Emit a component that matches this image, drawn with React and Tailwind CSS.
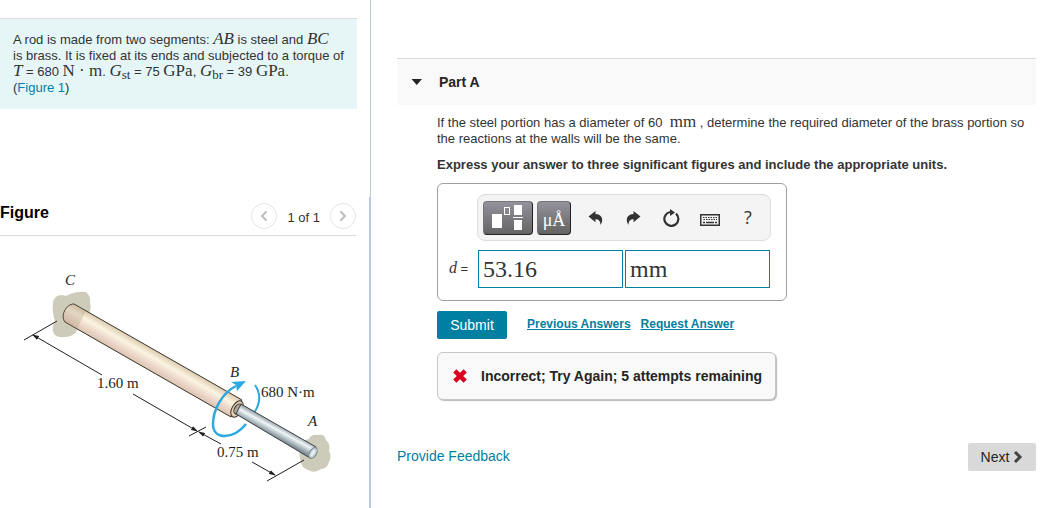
import { useState } from "react"
import { ChevronLeft, ChevronRight } from "lucide-react"

function MathText({ children, italic = false }) {
  return (
    <span
      className={`inline-block font-['Liberation_Serif',serif] text-[17px] leading-3 ${italic ? "italic" : ""}`}
    >
      {children}
    </span>
  )
}

function Problem() {
  return (
    <section className="mt-[18px] mr-[13px] border-t border-[#dcdcdc] bg-[#e6f6f7] pt-[13px] pr-1 pb-[13px] pl-[13px] text-[13px] leading-4">
      <p>
        A rod is made from two segments: <MathText italic>AB</MathText> is steel and <MathText italic>BC</MathText>
        <br />
        is brass. It is fixed at its ends and subjected to a torque of
        <br />
        <MathText italic>T</MathText> = 680 <MathText>N · m</MathText>. <MathText italic>G</MathText>
        <sub className="font-['Liberation_Serif',serif] text-[13px]">st</sub> = 75 <MathText>GPa</MathText>,{" "}
        <MathText italic>G</MathText>
        <sub className="font-['Liberation_Serif',serif] text-[13px]">br</sub> = 39 <MathText>GPa</MathText>.
      </p>
      <p>
        (
        <a href="#figure" className="text-[#007fa3]">
          Figure 1
        </a>
        )
      </p>
    </section>
  )
}

function RodDiagram() {
  return (
    <svg viewBox="0 236 369 260" className="block w-full" role="img" aria-label="Rod fixed at walls A and C">
      <defs>
        <linearGradient id="brass" gradientUnits="userSpaceOnUse" x1="158" y1="352" x2="146" y2="373">
          <stop offset="0" stopColor="#dccbae" />
          <stop offset="0.3" stopColor="#fbf4e2" />
          <stop offset="0.6" stopColor="#ecd6c8" />
          <stop offset="1" stopColor="#cdb89f" />
        </linearGradient>
        <linearGradient id="steel" gradientUnits="userSpaceOnUse" x1="279" y1="425" x2="273" y2="436">
          <stop offset="0" stopColor="#8e9ca3" />
          <stop offset="0.4" stopColor="#f1f6f8" />
          <stop offset="0.7" stopColor="#b4c2c8" />
          <stop offset="1" stopColor="#7d8b90" />
        </linearGradient>
        <marker id="arrow" orient="auto-start-reverse" markerUnits="userSpaceOnUse" markerWidth="7" markerHeight="5" refX="6" refY="2.5">
          <path d="M0 0.3 L7 2.5 L0 4.7 Z" fill="#231f20" />
        </marker>
      </defs>

      {/* Walls */}
      <path
        d="M53 303 Q54 295 62 295 Q67 297 70 294 Q78 291 86 292 Q91 296 90 303 Q92 309 88 316 Q86 325 78 329 Q74 337 65 337 Q54 338 53 331 Q52 326 55 321 Q52 312 53 303 Z"
        fill="#cdcbb9"
      />
      <path
        d="M301 445 Q304 439 309 439 Q311 434 318 435 Q325 434 326 440 Q331 445 329 451 Q332 457 329 462 Q327 469 321 469 Q314 474 308 470 Q301 467 301 462 Q298 455 301 445 Z"
        fill="#cdcbb9"
      />

      {/* Far side of the torque arc */}
      <path d="M255 385 Q264 398 254 413" fill="none" stroke="#2ba9e0" strokeWidth="2" />

      {/* Brass segment */}
      <path
        d="M74 304 L242 400 L231 417 L65 322 C60 316 66 304 74 304 Z"
        fill="url(#brass)"
        stroke="#3b332c"
        strokeWidth="1"
      />
      <path d="M74 304 L86 311 L77 329 L65 322 C60 316 66 304 74 304 Z" fill="#a8987a" opacity="0.3" />
      <ellipse cx="237" cy="409" rx="5" ry="9" transform="rotate(30 237 409)" fill="#e5cfb6" stroke="#3b332c" />
      <ellipse cx="238" cy="409" rx="3.5" ry="5.5" transform="rotate(30 238 409)" fill="#a9a59b" stroke="#3b332c" />

      {/* Steel segment */}
      <path d="M241 404 L316 447 L310 458 L236 414 Z" fill="url(#steel)" stroke="#3b4346" strokeWidth="1" />
      <ellipse cx="313" cy="453" rx="3.5" ry="6" transform="rotate(30 313 453)" fill="#c2ced2" stroke="#7b888c" />
      <ellipse cx="313" cy="453" rx="1.5" ry="3.5" transform="rotate(30 313 453)" fill="#e7eef0" />

      {/* Torque arrow */}
      <path d="M236 386 C222 393 213 410 213 424 C213 440 233 440 246 424" fill="none" stroke="#2ba9e0" strokeWidth="2.5" />
      <path d="M246 381 L231 382 L236 385 L237 391 Z" fill="#2ba9e0" />

      {/* Dimension lines */}
      <g stroke="#231f20" strokeWidth="1" fill="none">
        <path d="M24 340 L57 321" />
        <path d="M33 335 L102 375" markerStart="url(#arrow)" />
        <path d="M133 394 L197 431" markerEnd="url(#arrow)" />
        <path d="M189 436 L206 427" />
        <path d="M199 432 L221 444" markerStart="url(#arrow)" />
        <path d="M252 462 L275 475" markerEnd="url(#arrow)" />
        <path d="M267 481 L304 460" />
      </g>

      <g className="font-['Liberation_Serif',serif] text-[15px]" fill="#231f20">
        <text x="65" y="285" fontStyle="italic">C</text>
        <text x="230" y="377" fontStyle="italic">B</text>
        <text x="308" y="426" fontStyle="italic">A</text>
        <text x="97" y="388">1.60 m</text>
        <text x="261" y="397">680 N·m</text>
        <text x="217" y="457">0.75 m</text>
      </g>
    </svg>
  )
}

function Figure() {
  return (
    <section id="figure">
      <div className="mr-[13px] flex h-[39px] items-center justify-between border-b border-[#dcdcdc]">
        <h2 className="pb-1.5 text-base font-bold text-black">Figure</h2>
        <div className="flex items-center gap-2.5">
          <button
            aria-label="Previous figure"
            className="flex size-[26px] items-center justify-center rounded-full border border-[#e4e4e4] text-[#bdbdbd]"
          >
            <ChevronLeft className="size-4" strokeWidth={3} />
          </button>
          <span className="pt-1 text-[13px] leading-4">1 of 1</span>
          <button
            aria-label="Next figure"
            className="flex size-[26px] items-center justify-center rounded-full border border-[#e4e4e4] text-[#bdbdbd]"
          >
            <ChevronRight className="size-4" strokeWidth={3} />
          </button>
        </div>
      </div>
      <RodDiagram />
    </section>
  )
}

function CurvedArrow({ className = "" }) {
  return (
    <svg viewBox="0 0 15 16" className={`h-4 w-[15px] ${className}`} fill="currentColor">
      <path d="M.5 6.5 L7.5 1 V4 C12 4 14.5 7 14.2 10.5 C14 12.5 13.3 13.5 12.5 15 C12.5 11 10.5 9.3 7.5 9.3 V12.3 Z" />
    </svg>
  )
}

function Toolbar() {
  const darkButton =
    "flex h-[34px] items-center justify-center rounded border border-[#77757c] border-r-[#222] border-b-[#222] bg-linear-to-b from-[#94929c] to-[#646464] text-white"

  return (
    <div className="flex h-[47px] items-center rounded-lg border border-[#dddddd] bg-[#f4f4f4] pl-[5px] text-[#333333]">
      <button aria-label="Templates" className={`${darkButton} w-[50px]`}>
        <svg viewBox="0 0 32 26" className="h-[26px] w-8" fill="currentColor">
          <rect x="0" y="9" width="10" height="14" />
          <rect x="12.5" y="2.5" width="5" height="7" fill="none" stroke="currentColor" />
          <rect x="22" y="0" width="8" height="10" />
          <rect x="21" y="12" width="10" height="1" />
          <rect x="22" y="15" width="8" height="10" />
        </svg>
      </button>
      <button
        aria-label="Symbols"
        className={`${darkButton} ml-1 w-[34px] pt-1 font-['Liberation_Serif',serif] text-lg leading-none`}
      >
        μÅ
      </button>
      <button aria-label="Undo" className="ml-[15px] flex w-[18px] justify-center">
        <CurvedArrow />
      </button>
      <button aria-label="Redo" className="ml-5 flex w-[18px] justify-center">
        <CurvedArrow className="-scale-x-100" />
      </button>
      <button aria-label="Reset" className="ml-5 flex w-[18px] justify-center">
        <svg viewBox="0 0 18 18" className="size-[18px]" fill="none" stroke="currentColor" strokeWidth="2.2">
          <path d="M14 4.6 A7 7 0 1 1 8 3" />
          <path d="M8 0 L13 3.5 L8 7 Z" fill="currentColor" stroke="none" />
        </svg>
      </button>
      <button aria-label="Keyboard" className="ml-5 flex w-5 justify-center">
        <svg viewBox="0 0 20 12" className="mt-1 h-3 w-5" fill="none" stroke="currentColor">
          <rect x="0.75" y="0.75" width="18.5" height="10.5" strokeWidth="1.5" />
          <path d="M3 3.5 H17 M3.5 5.5 H17" strokeWidth="1" strokeDasharray="1.5 1" />
          <path d="M3 8.5 H5 M6 8.5 H14 M15 8.5 H17" strokeWidth="1.5" />
        </svg>
      </button>
      <button
        aria-label="Help"
        className="ml-5 w-4 pb-0.5 text-center font-['Open_Sans',sans-serif] text-lg leading-none"
      >
        ?
      </button>
    </div>
  )
}

function AnswerBox() {
  const [value, setValue] = useState("53.16")
  const [units, setUnits] = useState("mm")
  const field =
    "h-[38px] w-[145px] border border-[#007fa3] bg-white px-1 font-['Liberation_Serif',serif] text-2xl text-[#333333] outline-none"

  return (
    <div className="mt-2.5 w-[350px] rounded-md border border-[#a0a0a0] pt-2.5 pr-[15px] pb-3 pl-[11px]">
      <div className="pl-7">
        <Toolbar />
      </div>
      <div className="mt-[9px] flex items-center">
        <label htmlFor="answer" className="w-[29px] text-[13px]">
          <span className="font-['Liberation_Serif',serif] text-base leading-none italic">d</span> =
        </label>
        <input id="answer" className={field} value={value} onChange={(e) => setValue(e.target.value)} />
        <input
          aria-label="Units"
          className={`${field} ml-0.5`}
          value={units}
          onChange={(e) => setUnits(e.target.value)}
        />
      </div>
    </div>
  )
}

function PartA() {
  return (
    <section>
      <button className="flex h-[47px] w-full items-center border-t border-[#dcdcdc] bg-[#f9f9f9] pl-3.5 text-sm font-bold text-[#252525]">
        <svg viewBox="0 0 12 8" className="mr-4 h-2 w-3" fill="currentColor">
          <path d="M0.5 1 H11 L5.75 7 Z" />
        </svg>
        Part A
      </button>

      <div className="pt-2.5 pl-10">
        <p className="text-[13px] leading-4">
          If the steel portion has a diameter of 60 &nbsp;<MathText>mm</MathText> , determine the required diameter of
          the brass portion so
          <br />
          the reactions at the walls will be the same.
        </p>
        <p className="mt-2.5 text-[13px] leading-4 font-bold">
          Express your answer to three significant figures and include the appropriate units.
        </p>

        <AnswerBox />

        <div className="mt-2.5 flex items-center text-xs font-bold text-[#007fa3]">
          <button className="h-7 w-[70px] rounded-xs bg-[#007fa3] text-sm font-normal text-white">Submit</button>
          <a href="#previous" className="ml-5 pb-0.5 underline">
            Previous Answers
          </a>
          <a href="#request" className="ml-2.5 pb-0.5 underline">
            Request Answer
          </a>
        </div>

        <div
          role="status"
          className="mt-[13px] flex h-12 w-[339px] items-center rounded-md border border-[#c6c6c6] bg-[#f9f9f9] pl-[15px] text-sm font-bold text-[#252525] shadow-[1px_1px_1px_#bbbbbb]"
        >
          <svg viewBox="0 0 14 14" className="mr-3.5 size-3.5" stroke="#db0020" strokeWidth="4.5">
            <path d="M1.8 1.8 L12.2 12.2 M12.2 1.8 L1.8 12.2" />
          </svg>
          Incorrect; Try Again; 5 attempts remaining
        </div>
      </div>
    </section>
  )
}

export default function App() {
  return (
    <div className="flex min-h-screen bg-white font-['Liberation_Sans',Arial,sans-serif] text-[#333333]">
      <aside className="flex w-[371px] shrink-0 flex-col">
        <div className="h-[197px] border-r border-[#b8cadb]">
          <Problem />
        </div>
        <div className="flex-1 border-r-2 border-[#b8cadb]">
          <Figure />
        </div>
      </aside>

      <main className="min-w-0 flex-1 pt-[58px] pr-3.5 pl-[26px]">
        <PartA />
        <div className="mt-[43px] flex items-center justify-between text-sm">
          <a href="#feedback" className="pb-0.5 text-[#007fa3]">
            Provide Feedback
          </a>
          <button className="flex h-7 w-[68px] items-center justify-center gap-1 rounded-xs bg-[#d9d9d9] text-[#252525]">
            Next
            <svg viewBox="0 0 10 12" className="h-3 w-2.5" fill="none" stroke="#444444" strokeWidth="3">
              <path d="M2 1 L7 6 L2 11" />
            </svg>
          </button>
        </div>
      </main>
    </div>
  )
}
